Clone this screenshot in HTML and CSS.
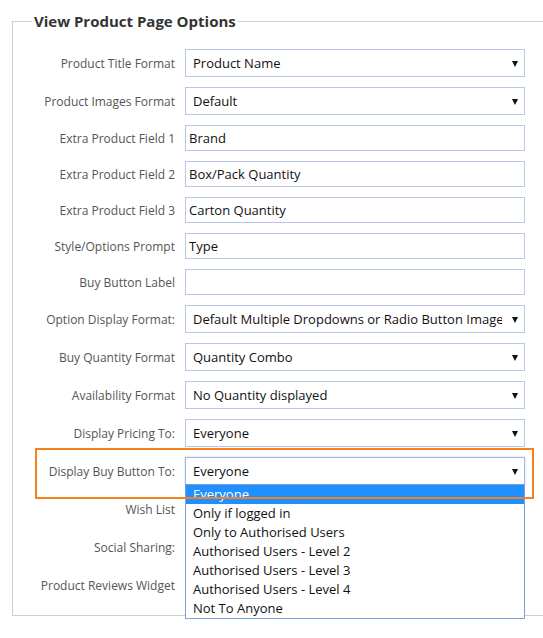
FILE: index.html
```html
<html>
  <head>
    <title>View Product Page Options</title>
    <meta name="viewport" content="width=device-width, initial-scale=1.0" />
    <link rel="stylesheet" href="styles.css">
  </head>
  <body>
    <div class="page">
      <fieldset class="options">
        <legend>View Product Page Options</legend>
        <div class="row">
          <label>Product Title Format</label>
          <div class="select"><span>Product Name</span></div>
        </div>
        <div class="row">
          <label>Product Images Format</label>
          <div class="select"><span>Default</span></div>
        </div>
        <div class="row">
          <label>Extra Product Field 1</label>
          <input class="text" type="text" value="Brand" />
        </div>
        <div class="row">
          <label>Extra Product Field 2</label>
          <input class="text" type="text" value="Box/Pack Quantity" />
        </div>
        <div class="row">
          <label>Extra Product Field 3</label>
          <input class="text" type="text" value="Carton Quantity" />
        </div>
        <div class="row">
          <label>Style/Options Prompt</label>
          <input class="text" type="text" value="Type" />
        </div>
        <div class="row">
          <label>Buy Button Label</label>
          <input class="text" type="text" value="" />
        </div>
        <div class="row">
          <label>Option Display Format:</label>
          <div class="select"><span>Default Multiple Dropdowns or Radio Button Images</span></div>
        </div>
        <div class="row">
          <label>Buy Quantity Format</label>
          <div class="select"><span>Quantity Combo</span></div>
        </div>
        <div class="row">
          <label>Availability Format</label>
          <div class="select"><span>No Quantity displayed</span></div>
        </div>
        <div class="row">
          <label>Display Pricing To:</label>
          <div class="select"><span>Everyone</span></div>
        </div>
        <div class="row highlight">
          <label>Display Buy Button To:</label>
          <div class="select focus">
            <span>Everyone</span>
            <ul class="dropdown">
              <li class="active">Everyone</li>
              <li>Only if logged in</li>
              <li>Only to Authorised Users</li>
              <li>Authorised Users - Level 2</li>
              <li>Authorised Users - Level 3</li>
              <li>Authorised Users - Level 4</li>
              <li>Not To Anyone</li>
            </ul>
          </div>
          <div class="callout"></div>
        </div>
        <!-- these three selects sit under the open list -->
        <div class="row">
          <label>Wish List</label>
          <div class="select"></div>
        </div>
        <div class="row">
          <label>Social Sharing:</label>
          <div class="select"></div>
        </div>
        <div class="row">
          <label>Product Reviews Widget</label>
          <div class="select"></div>
        </div>
      </fieldset>
    </div>
  </body>
</html>
```
FILE: styles.css
```css
body {
  margin: 0;
  background: #fff;
  font-family: "Open Sans", "Liberation Sans", sans-serif;
  overflow: hidden;
}
.page {
  padding: 11px 0 0 12px;
  width: 560px;
}
.options {
  margin: 0;
  padding: 18px 0 16px 0;
  border: 1px solid #cfcfcf;
  width: 545px;
  box-sizing: border-box;
}
.options legend {
  margin-left: 19px;
  padding: 0 2px;
  font-size: 15px;
  line-height: 20px;
  font-weight: bold;
  color: #333;
}
.row {
  display: grid;
  grid-template-columns: 162px 340px;
  column-gap: 10px;
  align-items: center;
  margin-bottom: 10px;
  position: relative;
}
.row:last-child {
  margin-bottom: 0;
}
.row label {
  text-align: right;
  font-size: 12px;
  color: #555;
}
.select {
  position: relative;
  height: 28px;
  box-sizing: border-box;
  border: 1px solid #b6c7e9;
  background: #fff;
  padding: 0 22px 0 7px;
  font-size: 13px;
  line-height: 26px;
  color: #111;
  white-space: nowrap;
}
.select > span {
  display: block;
  overflow: hidden;
}
.select::after {
  content: "";
  position: absolute;
  right: 6px;
  top: 11px;
  border-left: 3.5px solid transparent;
  border-right: 3.5px solid transparent;
  border-top: 6px solid #111;
}
.select.focus {
  border-color: #9db8e8;
  box-shadow: 0 0 2px #c4d6f5;
}
.text {
  height: 26px;
  box-sizing: border-box;
  border: 1px solid #b6c7e9;
  padding: 0 3px;
  margin: 0;
  font-family: "Open Sans", "Liberation Sans", sans-serif;
  font-size: 13px;
  color: #111;
  outline: none;
}
.dropdown {
  position: absolute;
  top: 26px;
  left: -1px;
  width: 340px;
  box-sizing: border-box;
  margin: 0;
  padding: 0;
  list-style: none;
  border: 1px solid #7c9fd6;
  background: #fff;
  z-index: 2;
}
.dropdown li {
  height: 19px;
  line-height: 19px;
  padding-left: 7px;
  font-size: 13px;
  color: #111;
}
.dropdown li.active {
  background: #1e90ff;
  color: #fff;
}
.callout {
  position: absolute;
  top: -9px;
  left: 22px;
  width: 499px;
  height: 51px;
  box-sizing: border-box;
  border: 2px solid #f5821f;
  z-index: 3;
  pointer-events: none;
}
```
